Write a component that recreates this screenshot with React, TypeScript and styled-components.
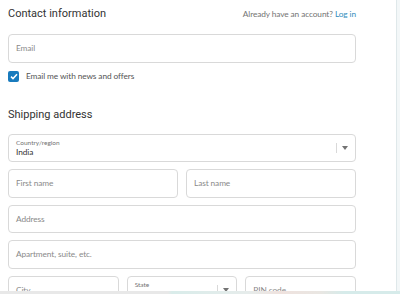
import React from 'react';
import styled, { createGlobalStyle } from 'styled-components';

const GlobalStyle = createGlobalStyle`
  body {
    margin: 0;
    font-family: Lato, 'Open Sans', sans-serif;
    background: #fff;
  }
  * {
    box-sizing: border-box;
  }
`;

type FieldProps = {
  placeholder?: string;
  label?: string;
  value?: string;
  select?: boolean;
};

function Field({ placeholder, label, value, select }: FieldProps) {
  return (
    <Styled.Field>
      <Styled.FieldText>
        {label && <Styled.FloatingLabel>{label}</Styled.FloatingLabel>}
        {value ? <Styled.Value>{value}</Styled.Value> : <Styled.Placeholder>{placeholder}</Styled.Placeholder>}
      </Styled.FieldText>
      {select && (
        <Styled.SelectArrow>
          <Styled.Divider />
          <svg width="6" height="4" viewBox="0 0 6 4">
            <path d="M0 0h6L3 4z" fill="#737373" />
          </svg>
        </Styled.SelectArrow>
      )}
    </Styled.Field>
  );
}

export default function App() {
  return (
    <>
      <GlobalStyle />
      <Styled.Page>
        <Styled.Body>
          <Styled.Main>
            <Styled.HeaderRow>
              <Styled.Heading>Contact information</Styled.Heading>
              <Styled.Small>
                Already have an account? <Styled.Link>Log in</Styled.Link>
              </Styled.Small>
            </Styled.HeaderRow>
            <Styled.Fields>
              <Field placeholder="Email" />
            </Styled.Fields>
            <Styled.CheckRow>
              <Styled.Checkbox>
                <svg width="8" height="7" viewBox="0 0 8 7">
                  <path d="M1 3.6l2 2L7 1.2" stroke="#fff" strokeWidth="1.5" fill="none" />
                </svg>
              </Styled.Checkbox>
              <Styled.CheckLabel>Email me with news and offers</Styled.CheckLabel>
            </Styled.CheckRow>
            <Styled.SectionHeading>Shipping address</Styled.SectionHeading>
            <Styled.Fields>
              <Field label="Country/region" value="India" select />
              <Styled.Row $cols={2}>
                <Field placeholder="First name" />
                <Field placeholder="Last name" />
              </Styled.Row>
              <Field placeholder="Address" />
              <Field placeholder="Apartment, suite, etc." />
              <Styled.Row $cols={3}>
                <Field placeholder="City" />
                <Field label="State" value=" " select />
                <Field placeholder="PIN code" />
              </Styled.Row>
            </Styled.Fields>
          </Styled.Main>
          <Styled.Sidebar />
        </Styled.Body>
        <Styled.Strip />
      </Styled.Page>
    </>
  );
}

const Styled = {
  Page: styled.div`
    width: 400px;
    height: 294px;
    display: flex;
    flex-direction: column;
    overflow: hidden;
  `,
  Body: styled.div`
    flex: 1;
    display: flex;
    overflow: hidden;
  `,
  Main: styled.main`
    width: 396px;
    padding: 4px 40px 0 8px;
  `,
  Sidebar: styled.aside`
    flex: 1;
    background: #f3f7f8;
    border-left: 1px solid #dfe8ea;
  `,
  Strip: styled.div`
    height: 3px;
    background: linear-gradient(
      90deg,
      #e8e8e8 0%,
      #e8e8e8 42%,
      #d9ecea 43%,
      #e6eceb 62%,
      #efe2de 70%,
      #e9e6e2 80%,
      #d6ebea 86%,
      #d6ebea 100%
    );
  `,
  HeaderRow: styled.div`
    display: flex;
    justify-content: space-between;
    align-items: baseline;
    height: 30px;
  `,
  Heading: styled.h2`
    margin: 0;
    font-family: Roboto, 'Liberation Sans', sans-serif;
    font-size: 11px;
    font-weight: 400;
    line-height: 20px;
    color: #333;
  `,
  SectionHeading: styled.h2`
    margin: 0;
    padding-top: 23px;
    height: 52px;
    font-family: Roboto, 'Liberation Sans', sans-serif;
    font-size: 11px;
    font-weight: 400;
    line-height: 20px;
    color: #333;
  `,
  Small: styled.span`
    font-size: 8.3px;
    letter-spacing: -0.1px;
    color: #737373;
  `,
  Link: styled.a`
    color: #338dbc;
    cursor: pointer;
  `,
  Fields: styled.div`
    display: flex;
    flex-direction: column;
    gap: 7px;
  `,
  Row: styled.div<{ $cols: number }>`
    display: grid;
    grid-template-columns: repeat(${(p) => p.$cols}, 1fr);
    gap: 8px;
  `,
  Field: styled.div`
    height: 28.5px;
    display: flex;
    align-items: center;
    border: 1px solid #d9d9d9;
    border-radius: 4px;
    padding: 0 7px;
    background: #fff;
  `,
  FieldText: styled.div`
    flex: 1;
    display: flex;
    flex-direction: column;
    justify-content: center;
  `,
  FloatingLabel: styled.span`
    font-size: 6.5px;
    line-height: 9px;
    color: #737373;
  `,
  Value: styled.span`
    font-size: 8.3px;
    letter-spacing: -0.1px;
    line-height: 10px;
    color: #333;
    white-space: pre;
  `,
  Placeholder: styled.span`
    font-size: 8.3px;
    letter-spacing: -0.1px;
    color: #8a8a8a;
  `,
  SelectArrow: styled.div`
    display: flex;
    align-items: center;
    gap: 5px;
  `,
  Divider: styled.span`
    width: 1px;
    height: 10px;
    background: #d9d9d9;
  `,
  CheckRow: styled.label`
    display: flex;
    align-items: center;
    gap: 7px;
    margin-top: 8px;
  `,
  Checkbox: styled.span`
    width: 11px;
    height: 11px;
    border-radius: 2px;
    background: #197bbd;
    display: flex;
    align-items: center;
    justify-content: center;
  `,
  CheckLabel: styled.span`
    font-size: 8.3px;
    letter-spacing: -0.1px;
    color: #545454;
  `,
};
